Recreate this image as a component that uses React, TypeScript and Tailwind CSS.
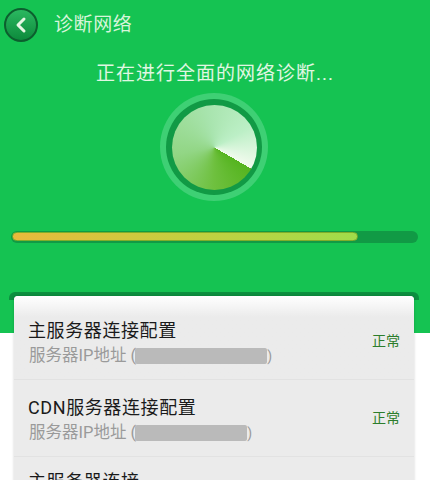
const font = { fontFamily: '"Roboto", "Noto Sans CJK SC", sans-serif' };

type ServerRowProps = {
  title: string;
  blurWidth: string;
};

function ServerRow({ title, blurWidth }: ServerRowProps) {
  return (
    <div className="flex h-[77px] items-center justify-between border-b border-[#e2e2e2] pl-[15px] pr-[14px]">
      <div className="pt-[3px]">
        <p className="-ml-[1px] text-[18px] leading-[26px] tracking-[0.6px] text-[#1a1a1a]">{title}</p>
        <div className="flex h-[24px] items-center text-[16.5px] leading-[24px] text-[#9a9a9a]">
          <span>服务器IP地址 (</span>
          <span className={`${blurWidth} -ml-[1px] h-[16px] rounded-[2px] bg-[#bababa]`} />
          <span className="text-[14px]">)</span>
        </div>
      </div>
      <span className="mt-[1px] text-[14px] text-[#2c7d2c]">正常</span>
    </div>
  );
}

export default function App() {
  return (
    <div className="h-[480px] w-[430px] overflow-hidden bg-white" style={font}>
      <div className="h-[333px] bg-[#15c352] pt-[8px]">
        <header className="flex h-[34px] items-center pl-[4px]">
          <button className="flex h-[34px] w-[34px] items-center justify-center rounded-full border-2 border-[#0c5f2e] bg-gradient-to-b from-[#2ab860] to-[#0c8a3c]">
            <svg width="16" height="18" viewBox="0 0 16 18" fill="none">
              <path d="M11 3 L5 9 L11 15" stroke="#e6f7e4" strokeWidth="3" strokeLinecap="round" strokeLinejoin="round" />
            </svg>
          </button>
          <h1 className="ml-[16px] text-[19px] tracking-[0.6px] text-[#d6f5da]">诊断网络</h1>
        </header>

        <p className="mt-[19px] text-center text-[19px] leading-[26px] tracking-[1px] text-[#e0f7e2]">
          正在进行全面的网络诊断...
        </p>

        <div className="mt-[6px] flex justify-center pr-[2px]">
          <div className="flex h-[108px] w-[108px] items-center justify-center rounded-full bg-[#3ed074]">
            <div className="flex h-[96px] w-[96px] items-center justify-center rounded-full bg-[#119a45]">
              <div className="h-[85px] w-[85px] rounded-full bg-[conic-gradient(from_120deg,#55b41f_0deg,#6ec03e_60deg,#92d685_140deg,#a8e4ae_230deg,#bcefc6_300deg,#f2fbee_360deg)]" />
            </div>
          </div>
        </div>

        <div className="mx-[11px] mt-[30px] h-[12px] w-[407px] rounded-full bg-[#119a45] p-[1px]">
          <div className="h-[9px] w-[346px] rounded-full border border-[#7fae2a] bg-gradient-to-r from-[#e9b93c] via-[#c3cf3f] to-[#9fdc4a]" />
        </div>

        <div className="mx-[9px] mt-[49px] h-[8px] w-[410px] rounded-t-[6px] bg-[#0c8f3f]" />
      </div>

      <section className="mx-[14px] -mt-[37px] h-[200px] w-[400px] rounded-t-[4px] bg-[#ebebeb] shadow-[0_0_3px_rgba(0,0,0,0.18)]">
        <div className="-mb-[84px] h-[84px] rounded-t-[4px] bg-gradient-to-b from-white via-[#ebebeb] via-25% to-[#ebebeb]" />
        <div className="relative pt-[7px]">
          <ServerRow title="主服务器连接配置" blurWidth="w-[132px]" />
          <ServerRow title="CDN服务器连接配置" blurWidth="w-[112px]" />
          <div className="pl-[14px] pt-[12px]">
            <p className="text-[18px] leading-[26px] tracking-[0.6px] text-[#1a1a1a]">主服务器连接</p>
          </div>
        </div>
      </section>
    </div>
  );
}
